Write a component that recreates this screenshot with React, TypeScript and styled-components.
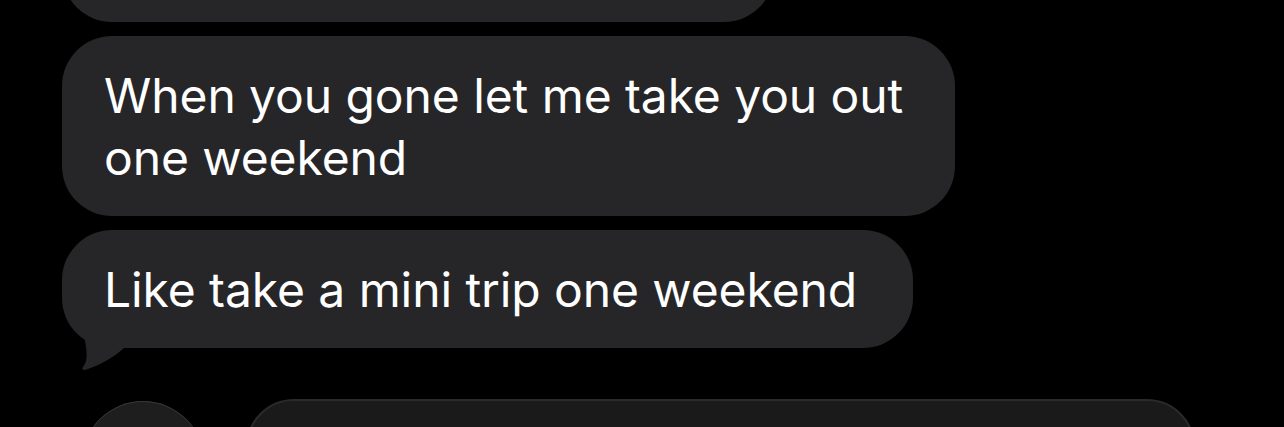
import styled, { createGlobalStyle } from "styled-components";

const GlobalStyle = createGlobalStyle`
  html, body {
    margin: 0;
    padding: 0;
    background: #000000;
    overflow: hidden;
  }
`;

const Screen = styled.main`
  width: 1284px;
  height: 427px;
  overflow: hidden;
  background: #000000;
  font-family: Inter, "Liberation Sans", sans-serif;
`;

// --- Message thread ---

const Thread = styled.div`
  display: flex;
  flex-direction: column;
  align-items: flex-start;
  gap: 14px;
  padding-left: 62px;
  margin-top: -97px;
`;

const Bubble = styled.div<{ $width?: number; $height?: number }>`
  position: relative;
  box-sizing: border-box;
  ${(p) => (p.$width ? `width: ${p.$width}px;` : "")}
  ${(p) => (p.$height ? `height: ${p.$height}px;` : "")}
  padding: 29px 56px 27px 42px;
  border-radius: 50px;
  background: #262628;
  color: #ffffff;
  font-size: 48px;
  line-height: 62px;
  letter-spacing: -0.08px;
  white-space: nowrap;
`;

const Tail = styled.svg`
  position: absolute;
  left: 0;
  top: 0;
  width: 64px;
  height: 142px;
  overflow: visible;
`;

// --- Composer ---

const Composer = styled.div`
  display: flex;
  align-items: flex-start;
  gap: 42px;
  margin-top: 51px;
  padding-left: 82px;
`;

const ActionButton = styled.div`
  flex: none;
  width: 122px;
  height: 122px;
  margin-top: 2px;
  border-radius: 50%;
  background: #1e1e1f;
  box-shadow: inset 0 1px 0 #38383a;
`;

const Field = styled.div`
  flex: none;
  width: 949px;
  height: 96px;
  box-sizing: border-box;
  border-radius: 50px;
  background: #1a1a1b;
  border: 2px solid #2a2a2c;
`;

export default function App() {
  return (
    <Screen>
      <GlobalStyle />
      <Thread>
        <Bubble $width={712} $height={119} />
        <Bubble $width={893}>
          When you gone let me take you out
          <br />
          one weekend
        </Bubble>
        <Bubble>
          Like take a mini trip one weekend
          <Tail viewBox="0 0 64 142">
            <path
              d="M23,96 L23,111 C25,122 26,131 21,137 C19,140 22,141 26,139 C40,134 52,127 62,118 L62,96 Z"
              fill="#262628"
            />
          </Tail>
        </Bubble>
      </Thread>
      <Composer>
        <ActionButton />
        <Field />
      </Composer>
    </Screen>
  );
}
